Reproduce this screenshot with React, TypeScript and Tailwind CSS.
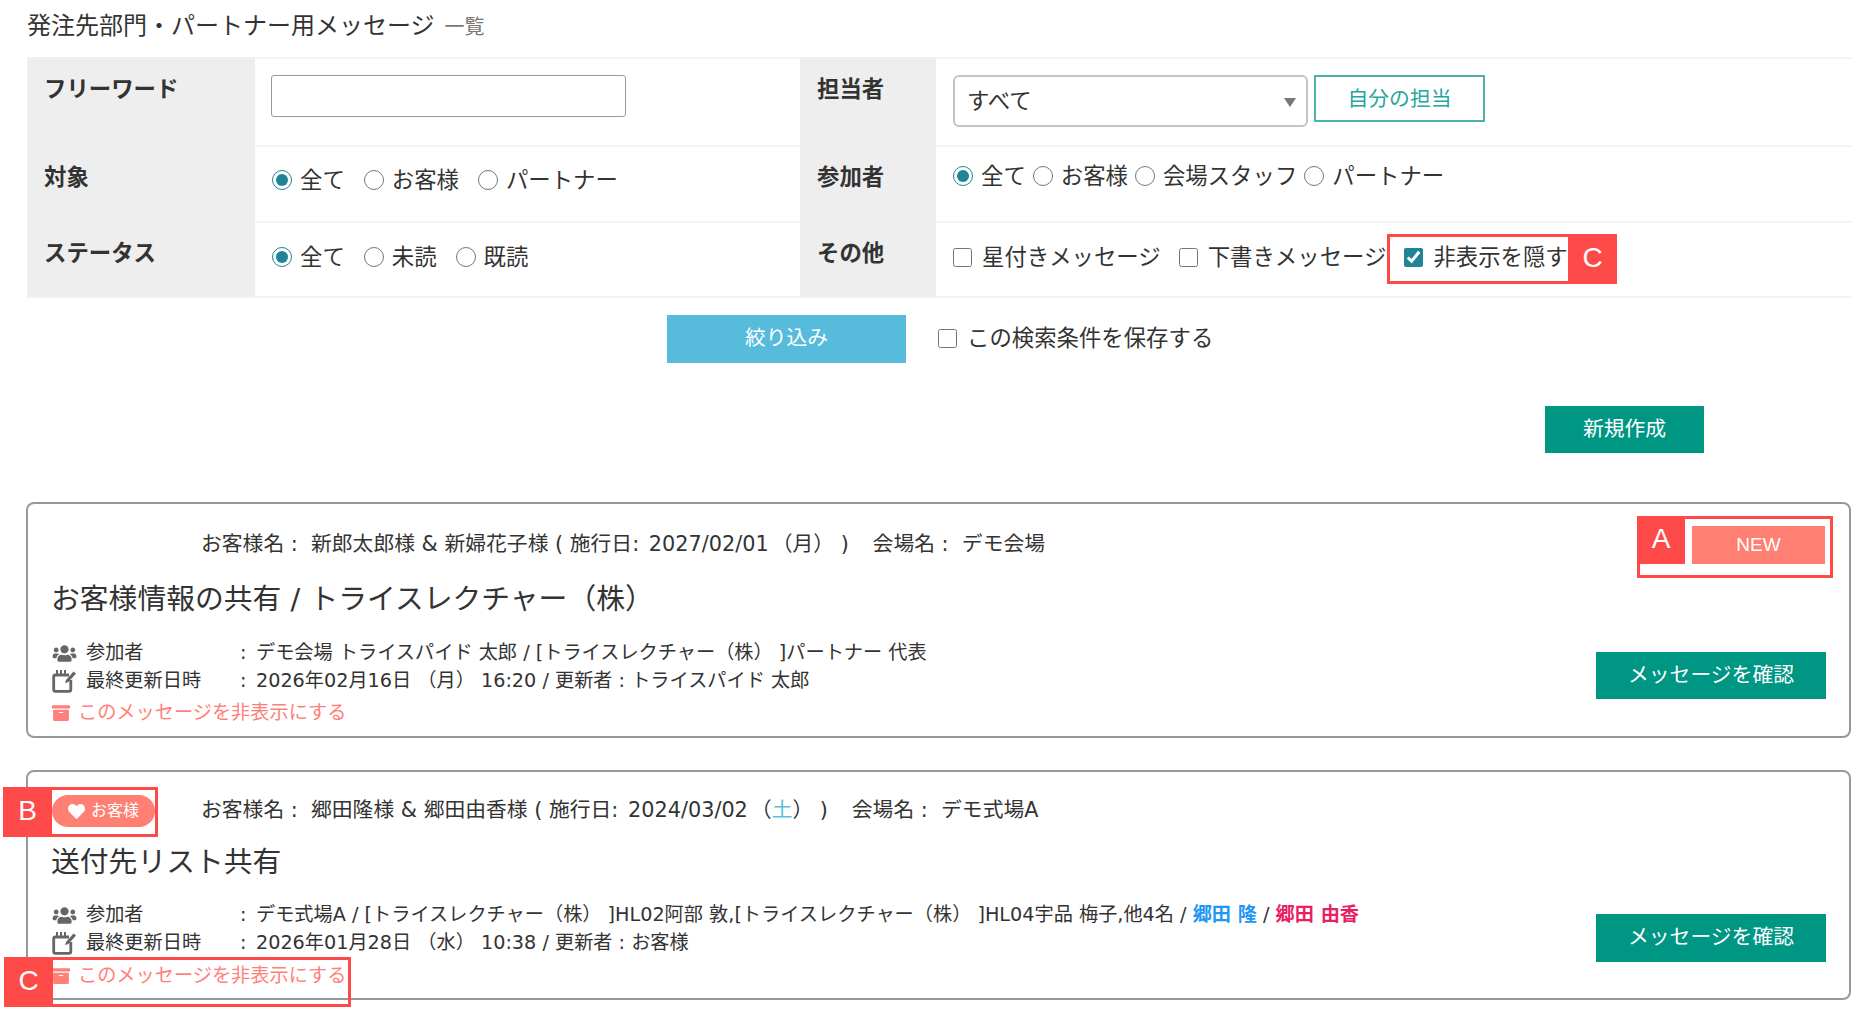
import { FaArchive, FaHeart, FaUsers } from "react-icons/fa";

function Radio({ name, label, checked }: { name: string; label: string; checked?: boolean }) {
  return (
    <label className="flex items-center gap-[8px]">
      <input type="radio" name={name} defaultChecked={checked} className="m-0 h-[20px] w-[20px] accent-[#1f8496]" />
      <span>{label}</span>
    </label>
  );
}

function Check({ label, checked }: { label: string; checked?: boolean }) {
  return (
    <label className="flex items-center gap-[10px]">
      <input type="checkbox" defaultChecked={checked} className="m-0 h-[19px] w-[19px] accent-[#1f8496]" />
      <span>{label}</span>
    </label>
  );
}

function CalendarEdit() {
  return (
    <svg viewBox="0 0 25 24" className="h-[24px] w-[25px]" fill="none">
      <path d="M17 6H3.500A1.800 1.800 0 0 0 1.700 7.800v12.700a1.800 1.800 0 0 0 1.800 1.800h13.500a1.800 1.800 0 0 0 1.800-1.800V11" stroke="#666" strokeWidth="2.800" />
      <path d="M5 1v4.500M9 1v4.500M13 1v4.500" stroke="#666" strokeWidth="2" />
      <path d="M14 11l7.500-8.500 2.500 2-7.500 8.500-3.500 1z" fill="#666" />
    </svg>
  );
}

function Tag({ letter, className }: { letter: string; className: string }) {
  return (
    <div className={`absolute flex items-center justify-center bg-[#ff4a4a] pb-[3px] font-['Liberation_Sans',sans-serif] text-[28px] leading-none text-white ${className}`}>
      {letter}
    </div>
  );
}

function MessageCard({
  className,
  badge,
  customer,
  title,
  participants,
  updated,
  showNew,
  rowsClass,
  titleClass,
  linesClass,
  hideClass,
  buttonClass,
}: {
  className: string;
  badge?: boolean;
  customer: React.ReactNode;
  title: string;
  participants: React.ReactNode;
  updated: string;
  showNew?: boolean;
  rowsClass: string;
  titleClass: string;
  linesClass: string;
  hideClass: string;
  buttonClass: string;
}) {
  return (
    <div className={`-ml-[1px] rounded-[8px] border-2 border-[#999] pl-[24px] pr-[24px] ${className}`}>
      <div className={`flex h-[38px] items-center ${rowsClass}`}>
        <div className="w-[149px] shrink-0">
          {badge && (
            <span className="flex h-[32px] w-[103px] items-center justify-center gap-[6px] rounded-full bg-[#ff7f73] text-[16px] text-white">
              <FaHeart className="h-[17px] w-[17px]" />
              お客様
            </span>
          )}
        </div>
        <div className="text-[20.800px] whitespace-pre">{customer}</div>
        {showNew && (
          <div className="ml-auto flex h-[38px] w-[133px] items-center justify-center bg-[#ff7f73] font-['Liberation_Sans',sans-serif] text-[19px] text-white">
            NEW
          </div>
        )}
      </div>
      <div className={`-ml-[1px] text-[28.800px] leading-[40px] ${titleClass}`}>{title}</div>
      <div className={`flex items-start justify-between ${linesClass}`}>
        <div className="text-[19.200px] leading-[28px]">
          <div className="flex items-center">
            <span className="w-[34px] shrink-0 text-[#666]">
              <FaUsers className="h-[19px] w-[25px]" />
            </span>
            <span className="w-[154px] shrink-0">参加者</span>
            <span className="w-[16px] shrink-0">:</span>
            <span className="whitespace-pre">{participants}</span>
          </div>
          <div className="flex items-center">
            <span className="w-[34px] shrink-0">
              <CalendarEdit />
            </span>
            <span className="w-[154px] shrink-0">最終更新日時</span>
            <span className="w-[16px] shrink-0">:</span>
            <span className="whitespace-pre">{updated}</span>
          </div>
          <div className={`flex items-center text-[#ff7f7a] ${hideClass}`}>
            <FaArchive className="mr-[8px] h-[18px] w-[18px]" />
            このメッセージを非表示にする
          </div>
        </div>
        <button className={`-mr-[1px] flex h-[47px] w-[230px] shrink-0 items-center justify-center bg-[#009684] text-[20.800px] text-white ${buttonClass}`}>
          メッセージを確認
        </button>
      </div>
    </div>
  );
}

export default function App() {
  return (
    <div className="relative h-[1018px] overflow-hidden bg-white pl-[27px] pr-[10px] font-['DejaVu_Sans','Noto_Sans_CJK_JP',sans-serif] text-[#333]">
      <h1 className="flex h-[57px] items-center pb-[6px] text-[24px] font-normal">
        発注先部門・パートナー用メッセージ
        <small className="ml-[10px] pt-[2px] text-[20px] text-[#777]">一覧</small>
      </h1>

      <div className="grid grid-cols-[228px_545px_136px_1fr] text-[22.400px] leading-[30px]">
        <div className="h-[88px] border-t-2 border-[#f0f0f0] bg-[#eee] pl-[17px] pt-[15px] font-bold">フリーワード</div>
        <div className="h-[88px] border-t-2 border-[#f4f4f4] pl-[16px] pt-[16px]">
          <input type="text" className="h-[42px] w-[355px] rounded-[3px] border border-[#999] bg-white" />
        </div>
        <div className="h-[88px] border-t-2 border-[#f0f0f0] bg-[#eee] pl-[17px] pt-[15px] font-bold">担当者</div>
        <div className="flex h-[88px] items-start gap-[6px] border-t-2 border-[#f4f4f4] pl-[17px] pt-[16px]">
          <div className="relative w-[355px]">
            <select className="h-[52px] w-full appearance-none rounded-[6px] border-2 border-[#c4c4c4] bg-white pl-[12px]">
              <option>すべて</option>
            </select>
            <span className="absolute right-[12px] top-[23px] h-0 w-0 border-x-[6px] border-t-[9px] border-x-transparent border-t-[#777]" />
          </div>
          <button className="h-[47px] w-[171px] border-2 border-[#4db3a6] bg-white text-[20.800px] text-[#26a69a]">自分の担当</button>
        </div>

        <div className="h-[76px] border-t-2 border-[#f0f0f0] bg-[#eee] pl-[17px] pt-[15px] font-bold">対象</div>
        <div className="flex h-[76px] items-start gap-[19px] border-t-2 border-[#f4f4f4] pl-[17px] pt-[18px]">
          <Radio name="target" label="全て" checked />
          <Radio name="target" label="お客様" />
          <Radio name="target" label="パートナー" />
        </div>
        <div className="h-[76px] border-t-2 border-[#f0f0f0] bg-[#eee] pl-[17px] pt-[15px] font-bold">参加者</div>
        <div className="flex h-[76px] items-start gap-[7px] border-t-2 border-[#f4f4f4] pl-[17px] pt-[14px]">
          <Radio name="member" label="全て" checked />
          <Radio name="member" label="お客様" />
          <Radio name="member" label="会場スタッフ" />
          <Radio name="member" label="パートナー" />
        </div>

        <div className="h-[77px] border-y-2 border-[#f0f0f0] bg-[#eee] pl-[17px] pt-[15px] font-bold">ステータス</div>
        <div className="flex h-[77px] items-start gap-[19px] border-y-2 border-[#f4f4f4] pl-[17px] pt-[19px]">
          <Radio name="status" label="全て" checked />
          <Radio name="status" label="未読" />
          <Radio name="status" label="既読" />
        </div>
        <div className="h-[77px] border-y-2 border-[#f0f0f0] bg-[#eee] pl-[17px] pt-[15px] font-bold">その他</div>
        <div className="flex h-[77px] items-start gap-[18px] border-y-2 border-[#f4f4f4] pl-[17px] pt-[19px]">
          <Check label="星付きメッセージ" />
          <Check label="下書きメッセージ" />
          <Check label="非表示を隠す" checked />
        </div>
      </div>

      <div className="mt-[17px] flex items-center pl-[640px] text-[22.400px]">
        <button className="h-[48px] w-[239px] bg-[#57bbdb] text-[20.800px] text-white">絞り込み</button>
        <div className="ml-[32px]">
          <Check label="この検索条件を保存する" />
        </div>
      </div>

      <div className="mt-[43px] flex justify-end pr-[147px]">
        <button className="h-[47px] w-[159px] bg-[#009684] text-[20.800px] text-white">新規作成</button>
      </div>

      <div className="mt-[49px]">
        <MessageCard
          className="h-[236px]"
          rowsClass="mt-[22px]"
          titleClass="mt-[15px]"
          linesClass="mt-[20px]"
          hideClass="mt-[4px]"
          buttonClass="mt-[13px]"
          customer={
            <>
              お客様名 :  新郎太郎様 & 新婦花子様 ( 施行日:<span className="ml-[3px]"> 2027/02/01</span>
              <span className="ml-[3px]">（月）</span> )   <span className="ml-[4px]">会場名 :  デモ会場</span>
            </>
          }
          title="お客様情報の共有 / トライスレクチャー（株）"
          participants="デモ会場 トライスパイド 太郎 / [トライスレクチャー（株） ]パートナー 代表"
          updated="2026年02月16日 （月） 16:20 / 更新者 : トライスパイド 太郎"
          showNew
        />
      </div>

      <div className="mt-[32px]">
        <MessageCard
          className="h-[230px]"
          badge
          rowsClass="mt-[20px]"
          titleClass="mt-[12px]"
          linesClass="mt-[19px]"
          hideClass="mt-[5px]"
          buttonClass="mt-[13px] h-[48px]"
          customer={
            <>
              お客様名 :  郷田隆様 & 郷田由香様 ( 施行日:<span className="ml-[3px]"> 2024/03/02</span>
              <span className="ml-[3px]">（<span className="text-[#5bc0de]">土</span>）</span> )   <span className="ml-[4px]">会場名 :  デモ式場A</span>
            </>
          }
          title="送付先リスト共有"
          participants={
            <>
              デモ式場A / [トライスレクチャー（株） ]HL02阿部 敦,[トライスレクチャー（株） ]HL04宇品 梅子,他4名 /{" "}
              <b className="text-[#2196f3]">郷田 隆</b> / <b className="text-[#e91e63]">郷田 由香</b>
            </>
          }
          updated="2026年01月28日 （水） 10:38 / 更新者 : お客様"
        />
      </div>

      <div className="absolute left-[1387px] top-[234px] h-[50px] w-[181px] border-[3px] border-r-0 border-[#ff4a4a]" />
      <Tag letter="C" className="left-[1568px] top-[234px] h-[50px] w-[49px]" />

      <div className="absolute left-[1637px] top-[516px] h-[62px] w-[196px] border-[3px] border-[#ff4a4a]" />
      <Tag letter="A" className="left-[1637px] top-[516px] h-[48px] w-[48px]" />

      <div className="absolute left-[3px] top-[787px] h-[50px] w-[155px] border-[3px] border-[#ff4a4a]" />
      <Tag letter="B" className="left-[3px] top-[787px] h-[50px] w-[49px]" />

      <div className="absolute left-[4px] top-[957px] h-[50px] w-[347px] border-[3px] border-[#ff4a4a]" />
      <Tag letter="C" className="left-[4px] top-[957px] h-[50px] w-[49px]" />
    </div>
  );
}
